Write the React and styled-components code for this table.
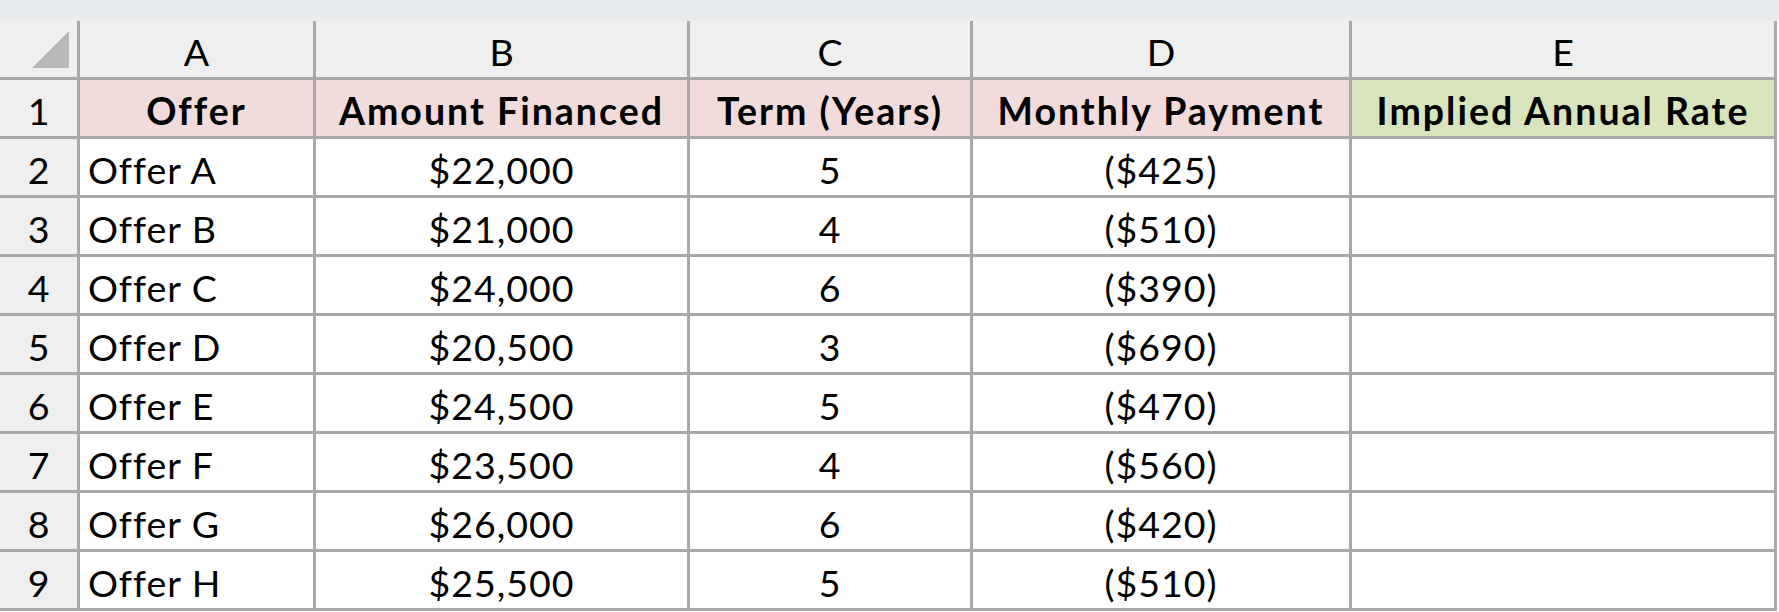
import React from "react";
import styled, { createGlobalStyle } from "styled-components";

const GRID_LINE = "#a8a8a8";

const GlobalStyle = createGlobalStyle`
  html, body {
    margin: 0;
    padding: 0;
    background: #ffffff;
  }
  body {
    font-family: "Lato", "Liberation Sans", sans-serif;
    color: #000;
  }
`;

const Page = styled.div`
  display: flex;
  flex-direction: column;
  width: 1779px;
  height: 612px;
  overflow: hidden;
  background: #ffffff;
`;

const TopStrip = styled.div`
  height: 21px;
  background: #e8ecef;
`;

const Sheet = styled.div`
  display: grid;
  grid-template-columns: 77px 233px 371px 280px 376px 422px;
  grid-auto-rows: 56px;
  gap: 3px;
  width: max-content;
  padding: 0 3px 3px 0;
  background: ${GRID_LINE};
`;

const Cell = styled.div`
  display: flex;
  align-items: center;
  justify-content: ${(p) =>
    p.$align === "left" ? "flex-start" : "center"};
  padding: 4px 0 0 ${(p) => (p.$align === "left" ? "8px" : "0")};
  font-size: 37.5px;
  font-weight: ${(p) => (p.$bold ? 700 : 400)};
  letter-spacing: ${(p) => (p.$bold ? "2px" : "1px")};
  background: ${(p) => p.$bg || "#ffffff"};
  white-space: nowrap;
  overflow: hidden;
`;

const HeaderCell = styled(Cell)`
  background: #efefef;
  letter-spacing: 0;
`;

const CornerCell = styled.div`
  display: flex;
  align-items: flex-end;
  justify-content: flex-end;
  padding: 0 8px 9px 0;
  background: #efefef;
`;

const CornerTriangle = () => (
  <svg width="37" height="37" viewBox="0 0 37 37" aria-hidden="true">
    <polygon points="37,0 37,37 0,37" fill="#b9b9b9" />
  </svg>
);

const columns = ["A", "B", "C", "D", "E"];

const HEADER_PINK = "#f2dcdb";
const HEADER_GREEN = "#d8e4bc";

const headers = [
  { label: "Offer", bg: HEADER_PINK },
  { label: "Amount Financed", bg: HEADER_PINK },
  { label: "Term (Years)", bg: HEADER_PINK },
  { label: "Monthly Payment", bg: HEADER_PINK },
  { label: "Implied Annual Rate", bg: HEADER_GREEN },
];

const offers = [
  ["Offer A", "$22,000", "5", "($425)"],
  ["Offer B", "$21,000", "4", "($510)"],
  ["Offer C", "$24,000", "6", "($390)"],
  ["Offer D", "$20,500", "3", "($690)"],
  ["Offer E", "$24,500", "5", "($470)"],
  ["Offer F", "$23,500", "4", "($560)"],
  ["Offer G", "$26,000", "6", "($420)"],
  ["Offer H", "$25,500", "5", "($510)"],
];

export default function App() {
  return (
    <>
      <GlobalStyle />
      <Page>
        <TopStrip />
        <Sheet>
          <CornerCell>
            <CornerTriangle />
          </CornerCell>
          {columns.map((c) => (
            <HeaderCell key={c}>{c}</HeaderCell>
          ))}

          <HeaderCell>1</HeaderCell>
          {headers.map((h) => (
            <Cell key={h.label} $bold $bg={h.bg}>
              {h.label}
            </Cell>
          ))}

          {offers.map((row, i) => (
            <React.Fragment key={row[0]}>
              <HeaderCell>{i + 2}</HeaderCell>
              <Cell $align="left">{row[0]}</Cell>
              <Cell>{row[1]}</Cell>
              <Cell>{row[2]}</Cell>
              <Cell>{row[3]}</Cell>
              <Cell />
            </React.Fragment>
          ))}
        </Sheet>
      </Page>
    </>
  );
}
